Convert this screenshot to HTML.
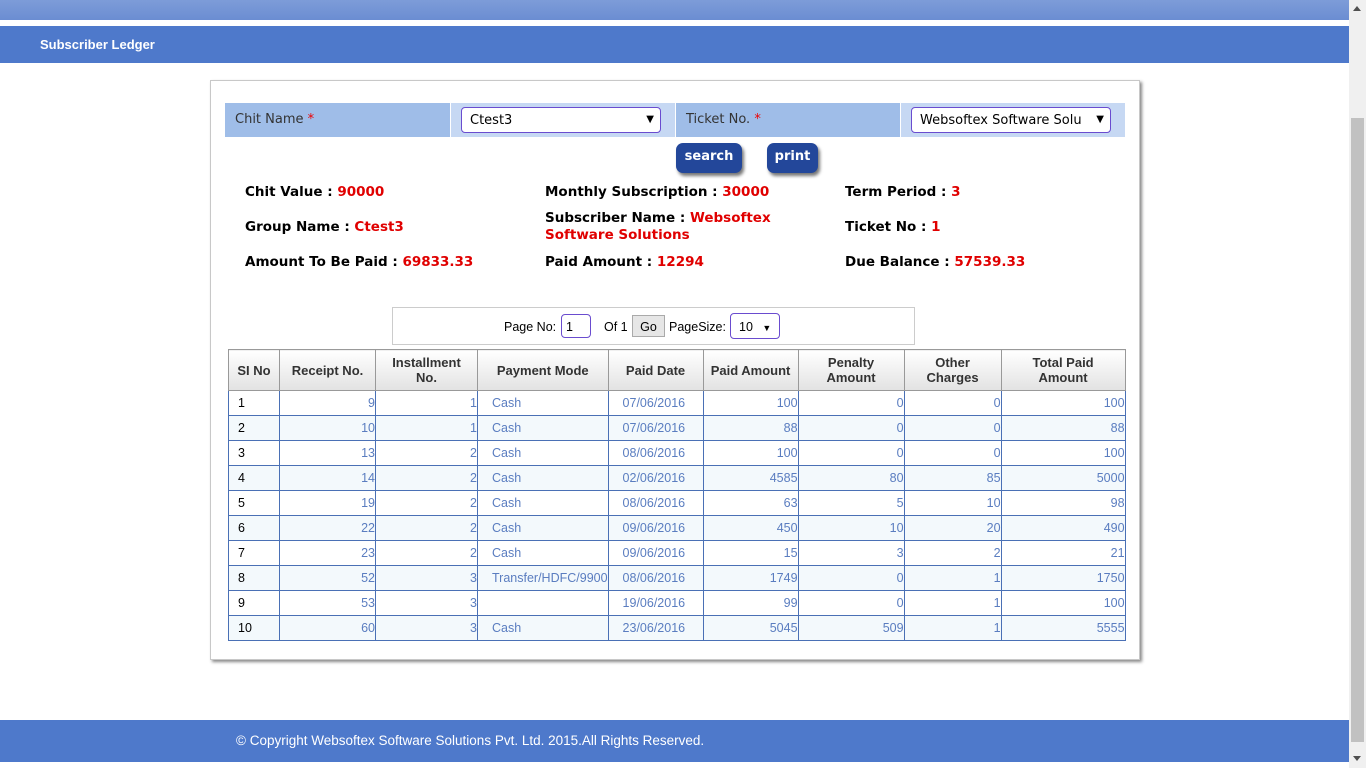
<!DOCTYPE html>
<html><head><meta charset="utf-8"><style>
*{margin:0;padding:0;box-sizing:border-box}
body{width:1366px;height:768px;overflow:hidden;background:#fff;font-family:"Liberation Sans",sans-serif;position:relative}
.top{position:absolute;left:0;top:0;width:1349px;height:20px;background:linear-gradient(#7d9cd8,#6b8dd2)}
.hdr{position:absolute;left:0;top:26px;width:1349px;height:37px;background:#4e79cb;color:#fff;font-weight:bold;font-size:13px;padding:11px 0 0 40px}
.sb{position:absolute;left:1349px;top:0;width:17px;height:768px;background:#f0f0f0}
.thumb{position:absolute;left:1351px;top:118px;width:13px;height:624px;background:#c1c1c1}
.panel{position:absolute;left:210px;top:80px;width:930px;height:580px;border:1px solid #c8c8c8;box-shadow:2px 2px 3px #888;background:#fff}
.row{position:absolute;top:103px;height:34px;font-family:"DejaVu Sans",sans-serif;font-size:13px;color:#333;padding:9px 0 0 10px}
.sel{position:absolute;top:107px;height:26px;border:1px solid #6a4ccf;border-radius:4px;background:#fff;font-family:"DejaVu Sans",sans-serif;font-size:13px;padding:5px 0 0 8px;white-space:nowrap;overflow:hidden}
.sel i{position:absolute;right:6px;top:6px;font-style:normal;font-size:10px}
.btn{position:absolute;top:143px;height:30px;background:#23479a;color:#fff;font-family:"DejaVu Sans",sans-serif;font-weight:bold;font-size:13px;border-radius:7px;box-shadow:2px 3px 3px #777;text-align:center;padding-top:6px}
.info{position:absolute;font-family:"DejaVu Sans",sans-serif;font-weight:bold;font-size:13.5px;color:#000;line-height:17px}
.info b{color:#e00000}
.pager{position:absolute;left:392px;top:307px;width:523px;height:38px;border:1px solid #ccc;font-size:12.5px;color:#000}
table{position:absolute;left:228px;top:349px;border-collapse:collapse;font-size:12.5px}
th{background:linear-gradient(#fff,#e2e2e2);border:1px solid #999;color:#333;font-weight:bold;height:41px;font-size:13px;line-height:15px}
td{border:1px solid #4a70b5;height:25px;color:#5a7dc0;text-align:right;padding:0}
td.l{text-align:left;padding-left:14px}
td.s{color:#000;text-align:left;padding-left:9px}
tr.a td{background:#f3f9fc}
.foot{position:absolute;left:0;top:720px;width:1349px;height:42px;background:#4e79cb;color:#fff;font-size:13.5px;padding:13px 0 0 236px}
</style></head><body>
<div class="top"></div>
<div class="hdr">Subscriber Ledger</div>
<div class="sb"><div style="position:absolute;left:4px;top:6px;border:4px solid transparent;border-bottom:5px solid #505050;border-top:0"></div><div style="position:absolute;left:4px;top:756px;border:4px solid transparent;border-top:5px solid #505050;border-bottom:0"></div></div>
<div class="thumb"></div>
<div class="panel"></div>
<div class="row" style="left:225px;width:225px;background:#9fbde8">Chit Name <span style="color:#e00">*</span></div>
<div class="row" style="left:451px;width:224px;background:#c6d8f3"></div>
<div class="row" style="left:676px;width:224px;background:#9fbde8">Ticket No. <span style="color:#e00">*</span></div>
<div class="row" style="left:901px;width:224px;background:#c6d8f3"></div>
<div class="sel" style="left:461px;width:200px">Ctest3<i>▼</i></div>
<div class="sel" style="left:911px;width:200px">Websoftex Software Solu<i style="background:#fff;padding-left:4px">▼</i></div>
<div class="btn" style="left:676px;width:66px">search</div>
<div class="btn" style="left:767px;width:51px">print</div>
<div class="info" style="left:245px;top:184px">Chit Value : <b>90000</b></div>
<div class="info" style="left:545px;top:184px">Monthly Subscription : <b>30000</b></div>
<div class="info" style="left:845px;top:184px">Term Period : <b>3</b></div>
<div class="info" style="left:245px;top:219px">Group Name : <b>Ctest3</b></div>
<div class="info" style="left:545px;top:210px;width:290px">Subscriber Name : <b>Websoftex Software Solutions</b></div>
<div class="info" style="left:845px;top:219px">Ticket No : <b>1</b></div>
<div class="info" style="left:245px;top:254px">Amount To Be Paid : <b>69833.33</b></div>
<div class="info" style="left:545px;top:254px">Paid Amount : <b>12294</b></div>
<div class="info" style="left:845px;top:254px">Due Balance : <b>57539.33</b></div>
<div class="pager">
<span style="position:absolute;left:111px;top:12px">Page No:</span>
<span style="position:absolute;left:168px;top:6px;width:30px;height:24px;border:1px solid #6a4ccf;border-radius:4px;padding:5px 0 0 4px">1</span>
<span style="position:absolute;left:211px;top:12px">Of 1</span>
<span style="position:absolute;left:239px;top:7px;width:33px;height:22px;border:1px solid #aaa;background:#e6e6e6;text-align:center;padding-top:4px">Go</span>
<span style="position:absolute;left:276px;top:12px">PageSize:</span>
<span style="position:absolute;left:337px;top:5px;width:50px;height:26px;border:1px solid #6a4ccf;border-radius:4px;padding:6px 0 0 8px">10 <span style="font-size:9px;margin-left:6px">▼</span></span>
</div>
<table>
<tr><th style="width:51px">SI No</th><th style="width:96px">Receipt No.</th><th style="width:102px">Installment<br>No.</th><th style="width:128px">Payment Mode</th><th style="width:95px">Paid Date</th><th style="width:95px">Paid Amount</th><th style="width:106px">Penalty<br>Amount</th><th style="width:97px">Other<br>Charges</th><th style="width:124px">Total Paid<br>Amount</th></tr>
<tr><td class="s">1</td><td>9</td><td>1</td><td class="l">Cash</td><td class="l">07/06/2016</td><td>100</td><td>0</td><td>0</td><td>100</td></tr>
<tr class="a"><td class="s">2</td><td>10</td><td>1</td><td class="l">Cash</td><td class="l">07/06/2016</td><td>88</td><td>0</td><td>0</td><td>88</td></tr>
<tr><td class="s">3</td><td>13</td><td>2</td><td class="l">Cash</td><td class="l">08/06/2016</td><td>100</td><td>0</td><td>0</td><td>100</td></tr>
<tr class="a"><td class="s">4</td><td>14</td><td>2</td><td class="l">Cash</td><td class="l">02/06/2016</td><td>4585</td><td>80</td><td>85</td><td>5000</td></tr>
<tr><td class="s">5</td><td>19</td><td>2</td><td class="l">Cash</td><td class="l">08/06/2016</td><td>63</td><td>5</td><td>10</td><td>98</td></tr>
<tr class="a"><td class="s">6</td><td>22</td><td>2</td><td class="l">Cash</td><td class="l">09/06/2016</td><td>450</td><td>10</td><td>20</td><td>490</td></tr>
<tr><td class="s">7</td><td>23</td><td>2</td><td class="l">Cash</td><td class="l">09/06/2016</td><td>15</td><td>3</td><td>2</td><td>21</td></tr>
<tr class="a"><td class="s">8</td><td>52</td><td>3</td><td class="l">Transfer/HDFC/9900</td><td class="l">08/06/2016</td><td>1749</td><td>0</td><td>1</td><td>1750</td></tr>
<tr><td class="s">9</td><td>53</td><td>3</td><td class="l"></td><td class="l">19/06/2016</td><td>99</td><td>0</td><td>1</td><td>100</td></tr>
<tr class="a"><td class="s">10</td><td>60</td><td>3</td><td class="l">Cash</td><td class="l">23/06/2016</td><td>5045</td><td>509</td><td>1</td><td>5555</td></tr>
</table>
<div class="foot">© Copyright Websoftex Software Solutions Pvt. Ltd. 2015.All Rights Reserved.</div>
</body></html>
